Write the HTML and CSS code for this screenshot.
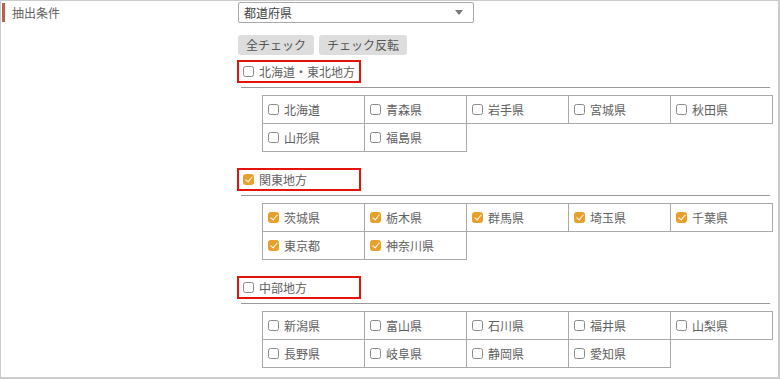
FILE: index.html
```html
<!DOCTYPE html>
<html lang="ja">
<head>
<meta charset="utf-8">
<link rel="stylesheet" href="styles.css">
</head>
<body>
<div class="frame">
  <div class="label-col"><span class="label-bar"></span><span class="label-text">抽出条件</span></div>
  <div class="main-col">
    <div class="select-wrap"><span class="select-text">都道府県</span><span class="select-arrow"></span></div>
    <div class="btn-row"><button class="btn">全チェック</button><button class="btn">チェック反転</button></div>

    <section class="region">
      <label class="region-head"><input type="checkbox" class="cb"><span>北海道・東北地方</span></label>
      <div class="rule"></div>
      <div class="grid">
        <label class="cell"><input type="checkbox" class="cb"><span>北海道</span></label>
        <label class="cell"><input type="checkbox" class="cb"><span>青森県</span></label>
        <label class="cell"><input type="checkbox" class="cb"><span>岩手県</span></label>
        <label class="cell"><input type="checkbox" class="cb"><span>宮城県</span></label>
        <label class="cell"><input type="checkbox" class="cb"><span>秋田県</span></label>
        <label class="cell"><input type="checkbox" class="cb"><span>山形県</span></label>
        <label class="cell"><input type="checkbox" class="cb"><span>福島県</span></label>
      </div>
    </section>

    <section class="region">
      <label class="region-head"><input type="checkbox" class="cb" checked><span>関東地方</span></label>
      <div class="rule"></div>
      <div class="grid">
        <label class="cell"><input type="checkbox" class="cb" checked><span>茨城県</span></label>
        <label class="cell"><input type="checkbox" class="cb" checked><span>栃木県</span></label>
        <label class="cell"><input type="checkbox" class="cb" checked><span>群馬県</span></label>
        <label class="cell"><input type="checkbox" class="cb" checked><span>埼玉県</span></label>
        <label class="cell"><input type="checkbox" class="cb" checked><span>千葉県</span></label>
        <label class="cell"><input type="checkbox" class="cb" checked><span>東京都</span></label>
        <label class="cell"><input type="checkbox" class="cb" checked><span>神奈川県</span></label>
      </div>
    </section>

    <section class="region">
      <label class="region-head"><input type="checkbox" class="cb"><span>中部地方</span></label>
      <div class="rule"></div>
      <div class="grid">
        <label class="cell"><input type="checkbox" class="cb"><span>新潟県</span></label>
        <label class="cell"><input type="checkbox" class="cb"><span>富山県</span></label>
        <label class="cell"><input type="checkbox" class="cb"><span>石川県</span></label>
        <label class="cell"><input type="checkbox" class="cb"><span>福井県</span></label>
        <label class="cell"><input type="checkbox" class="cb"><span>山梨県</span></label>
        <label class="cell"><input type="checkbox" class="cb"><span>長野県</span></label>
        <label class="cell"><input type="checkbox" class="cb"><span>岐阜県</span></label>
        <label class="cell"><input type="checkbox" class="cb"><span>静岡県</span></label>
        <label class="cell"><input type="checkbox" class="cb"><span>愛知県</span></label>
      </div>
    </section>
  </div>
</div>
</body>
</html>
```
FILE: styles.css
```css
* { box-sizing: border-box; }
html, body { margin: 0; padding: 0; background: #fff; }
body {
  font-family: "Noto Sans CJK JP", "Noto Sans", sans-serif;
  font-size: 12px;
  color: #616161;
}
.frame {
  width: 780px;
  height: 379px;
  border: 1px solid #ccc;
  border-right-width: 2px;
  border-bottom-width: 2px;
  display: flex;
  overflow: hidden;
  padding-top: 1px;
}
.label-col {
  width: 237px;
  flex: none;
  display: flex;
  align-items: flex-start;
  padding-left: 1px;
}
.label-bar {
  width: 3px;
  height: 19px;
  background: #b9624a;
  margin-top: 1px;
}
.label-text {
  margin-left: 7px;
  line-height: 21px;
}
.main-col {
  flex: 1;
  display: flex;
  flex-direction: column;
  align-items: flex-start;
}
.select-wrap {
  width: 236px;
  height: 21px;
  border: 1px solid #aaa;
  border-radius: 2px;
  display: flex;
  align-items: center;
  justify-content: space-between;
  padding: 0 10px 0 5px;
}
.select-text { line-height: 19px; color: #444; }
.select-arrow {
  width: 0; height: 0;
  border-left: 4px solid transparent;
  border-right: 4px solid transparent;
  border-top: 5px solid #777;
}
.btn-row {
  display: flex;
  gap: 5px;
  margin-top: 12px;
}
.btn {
  font: inherit;
  color: #555;
  background: #ddd;
  border: none;
  border-radius: 3px;
  height: 20px;
  padding: 0 8px;
  line-height: 20px;
}
.region {
  display: flex;
  flex-direction: column;
  align-items: flex-start;
  margin-top: 5px;
  width: 100%;
}
.region + .region { margin-top: 16px; }
.region-head {
  width: 124px;
  height: 23px;
  border: 2px solid #e4140c;
  display: flex;
  align-items: center;
  padding-left: 4px;
  gap: 5px;
  margin-left: -1px;
}
.rule {
  width: 529px;
  height: 1px;
  background: #999;
  margin-top: 4px;
  margin-left: 3px;
}
.grid {
  margin-top: 7px;
  margin-left: 24px;
  display: grid;
  grid-template-columns: repeat(5, 102px);
  grid-auto-rows: 28px;
  border-left: 1px solid #aaa;
  border-top: 1px solid #aaa;
}
.cell {
  border-right: 1px solid #aaa;
  border-bottom: 1px solid #aaa;
  display: flex;
  align-items: center;
  padding-left: 5px;
  gap: 5px;
}
.cb {
  appearance: none;
  -webkit-appearance: none;
  margin: 0;
  width: 11px;
  height: 11px;
  border: 1px solid #8a8a8a;
  border-radius: 2.5px;
  background: #fff;
  position: relative;
  flex: none;
}
.cb:checked {
  background: #e8a02a;
  border-color: #e8a02a;
}
.cb:checked::after {
  content: "";
  position: absolute;
  left: 3px;
  top: 0px;
  width: 3px;
  height: 6px;
  border-right: 1.5px solid #fff;
  border-bottom: 1.5px solid #fff;
  transform: rotate(40deg);
}
```
